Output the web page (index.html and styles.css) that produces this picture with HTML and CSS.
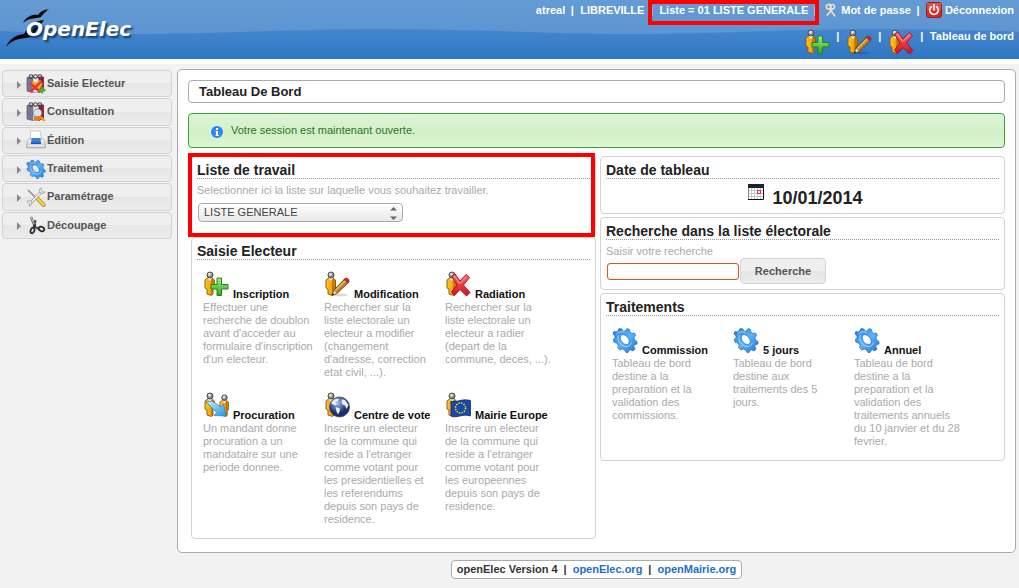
FILE: index.html
```html
<!DOCTYPE html>
<html lang="fr">
<head>
<meta charset="utf-8">
<title>openElec - Tableau De Bord</title>
<link rel="stylesheet" href="styles.css">
</head>
<body>
<svg class="sprite" aria-hidden="true">
  <defs>
    <linearGradient id="gBody"><stop offset="0" stop-color="#ffc62e"/><stop offset=".55" stop-color="#fba50c"/><stop offset="1" stop-color="#b87507"/></linearGradient>
    <radialGradient id="gHead" cx=".4" cy=".35"><stop offset="0" stop-color="#fff"/><stop offset="1" stop-color="#777"/></radialGradient>
    <linearGradient id="gPlus" x2="0" y2="1"><stop offset="0" stop-color="#a5ee7c"/><stop offset="1" stop-color="#2fa51c"/></linearGradient>
    <linearGradient id="gCross" x2="0" y2="1"><stop offset="0" stop-color="#ff6a6a"/><stop offset="1" stop-color="#cc1020"/></linearGradient>
    <linearGradient id="gGear" x2="1" y2="1"><stop offset="0" stop-color="#2379d6"/><stop offset=".5" stop-color="#5cb2fb"/><stop offset="1" stop-color="#1f74d8"/></linearGradient>
    <radialGradient id="gGlobe" cx=".4" cy=".3"><stop offset="0" stop-color="#a9bce6"/><stop offset=".6" stop-color="#4a67ab"/><stop offset="1" stop-color="#1c2f6c"/></radialGradient>
    <linearGradient id="gArrow" x2="1" y2="1"><stop offset="0" stop-color="#c8efff"/><stop offset="1" stop-color="#2296e6"/></linearGradient>
    <linearGradient id="gPrint" x2="0" y2="1"><stop offset="0" stop-color="#fdfdfd"/><stop offset="1" stop-color="#b9b9c2"/></linearGradient>
    <linearGradient id="gSky" x2="0" y2="1"><stop offset="0" stop-color="#649bd3"/><stop offset="1" stop-color="#5790d2"/></linearGradient>
    <linearGradient id="gSea" gradientUnits="userSpaceOnUse" x1="0" y1="28" x2="0" y2="59"><stop offset="0" stop-color="#4687cd"/><stop offset="1" stop-color="#2e76c5"/></linearGradient>
    <pattern id="wave" width="500" height="59" patternUnits="userSpaceOnUse">
      <path fill="url(#gSea)" d="M0 31C50 33 90 34 130 34C220 34 290 29 380 29C420 29 460 30 500 31V59H0Z"/>
    </pattern>
    <symbol id="person" viewBox="0 0 26 26">
      <path d="M2 9 4.500 7H9l2.500 2v8H10v6l-1.500 1.500L4 23v-5L2 17Z" fill="url(#gBody)" stroke="#8a5606" stroke-width=".9"/>
      <path d="M9 8v15.500" stroke="#a46a08" stroke-width="1"/>
      <path d="M5 7 7 10 9 7" fill="#fff"/>
      <circle cx="7" cy="4" r="3" fill="url(#gHead)" stroke="#4c4c4c" stroke-width="1"/>
    </symbol>
    <symbol id="plus" viewBox="0 0 26 26">
      <path d="M14 7h4.500v6.500H25V18h-6.500v6.500H14V18H8v-4.500h6Z" fill="url(#gPlus)" stroke="#23861b" stroke-width="1"/>
    </symbol>
    <symbol id="cross" viewBox="0 0 26 26">
      <path d="M6.500 5 10 3l5 7 6-6.500 3.500 3L18.500 14l6.500 7.500-3.500 3.500-6.500-6.500-5.500 6L6.500 21 12 14Z" fill="url(#gCross)" stroke="#a70a18" stroke-width=".9"/>
      <path d="M9 5l6 7.500L21.500 5.500" fill="none" stroke="#ff9b98" stroke-width="1"/>
    </symbol>
    <symbol id="pencil" viewBox="0 0 26 26">
      <ellipse cx="16" cy="24" rx="8" ry="1.500" fill="#000" opacity=".15"/>
      <path d="M8 24.500 10 19 20.500 8l4 3.500L13.500 22Z" fill="#bf8028" stroke="#67420f" stroke-width=".9"/>
      <path d="M11 20 22 9" stroke="#eab964" stroke-width="1.500"/>
      <path d="M8 24.500 10 19l3.500 3Z" fill="#f3d9a6" stroke="#67420f" stroke-width=".5"/>
      <path d="M8 24.500l.8-2.300 1.500 1.200Z" fill="#111"/>
      <path d="M20.500 8c1-2 5.500-.5 4.500 3l-.8.800-4.200-3.300Z" fill="#d3202a" stroke="#7b2020" stroke-width=".5"/>
    </symbol>
    <symbol id="gear" viewBox="0 0 26 26">
      <path fill="url(#gGear)" fill-rule="evenodd" stroke="#246db8" stroke-width=".7" d="M6 3.500 7 1.500l3 .5.500 2 2.500.2L15 1.500l2.500 1L18 5l2 1.500 2.500-.5 1 2.500L22 10.500l.5 2.500 2.500 1.500V17l-2.500.7-.7 1.800 1.200 2.500-2 2-2.500-1.200-1.500.6L16 25.500h-2L12.500 23l-2.200-1-2.600 1L5.500 20.500l.8-2.300L4.500 16 2 15.300 1.200 12.500l1.800-1.600v-2L1 7l.8-2.500L4.500 5Z M8.500 9C7.500 11.500 9.500 15.500 12.500 17C15 18.200 17 17.500 17.200 15C17.500 12 14.500 8.500 11.800 7.800C10.300 7.500 9 7.800 8.500 9Z"/>
      <path d="M6.500 8C4.500 12 7.500 17 11.500 19C15 20.500 19 19 19.200 15.500M4.500 7c2-2 5-3 8-1.500" fill="none" stroke="#a9daff" stroke-width="1"/>
    </symbol>
    <symbol id="globe" viewBox="0 0 26 26">
      <circle cx="15.500" cy="15" r="10" fill="url(#gGlobe)" stroke="#34416e" stroke-width=".8"/>
      <path d="M7 11c2-4 6-5 8-4l-1 2-2.500 1.500 2 1.500-2 1.500-2.500-1ZM11.500 15l4 1 .5 2.500-2 4-1.500-3ZM18 7l3.500 1.500L24.500 13 22.500 17l-1.500-3.500-2.500-1-1-2Z" fill="#e8edf8"/>
    </symbol>
    <symbol id="flag" viewBox="0 0 26 26">
      <path d="M6 9c5 2.500 10-3 19.500-.5V24C17 21 12 27 6 24Z" fill="#1849a6" stroke="#0c2a6c" stroke-width=".8"/>
      <circle cx="15.500" cy="16" r="5" fill="none" stroke="#ffe11c" stroke-width="1.500" stroke-dasharray="1.300 1.320"/>
    </symbol>
    <symbol id="arrow" viewBox="0 0 26 26">
      <path d="M3 10 9 9l9 6 2.500-3L23 24l-12-.5 2.500-3Z" fill="url(#gArrow)" stroke="#2583c4" stroke-width=".7"/>
    </symbol>
    <symbol id="keys" viewBox="0 0 16 16">
      <g fill="none" stroke="#8b9298" stroke-width="3.200"><circle cx="5" cy="4.500" r="2.500"/><path d="M6 7l6 8M9.500 6.500 3 14"/></g>
      <g fill="none" stroke="#e0e2e3" stroke-width="1.700"><circle cx="5" cy="4.500" r="2.500"/><circle cx="9" cy="4.500" r="2.300"/><path d="M6 7l6 8M9 7 3 14"/></g>
    </symbol>
    <symbol id="power" viewBox="0 0 16 16">
      <rect x=".5" y=".5" width="15" height="15" rx="2.500" fill="#da2822" stroke="#a51a19"/>
      <path d="M1 1h14v7H1Z" fill="#f07467" opacity=".5"/>
      <path d="M5.200 4.800a4.300 4.300 0 1 0 5.600 0M8 2.500v5.500" fill="none" stroke="#fff" stroke-width="1.700" stroke-linecap="round"/>
    </symbol>
    <symbol id="books" viewBox="0 0 20 20">
      <path d="M1 3.500 7 3v15.500L1 17Z" fill="#77779c" stroke="#50506b" stroke-width=".7"/>
      <path d="M7 3.500h6v15H7Z" fill="#e7e7ea" stroke="#8d8d98" stroke-width=".6"/>
      <path d="M13 3h4.500v13L13 18.500Z" fill="#9e1636" stroke="#66102a" stroke-width=".7"/>
      <g fill="none" stroke="#454545" stroke-width="1.100"><circle cx="5" cy="2.600" r="1.900"/><circle cx="9.500" cy="2.600" r="1.900"/><circle cx="13.800" cy="2.600" r="1.900"/></g>
    </symbol>
    <symbol id="m-entry" viewBox="0 0 20 20">
      <use href="#books" width="20" height="20"/>
      <path d="M6 7 10 9l4-3 2.500 4-3 5-7 1Z" fill="#ffb31a" stroke="#db7c00" stroke-width=".6"/>
      <path d="M4 9 14 18M15 8 4 18" stroke="#e3353a" stroke-width="2.400"/>
      <path d="M16 13v6.500M12.800 16.300H19.500" stroke="#46b52d" stroke-width="2.400"/>
    </symbol>
    <symbol id="m-search" viewBox="0 0 20 20">
      <use href="#books" width="20" height="20"/>
      <path d="m15 15 3.500 4" stroke="#e79a22" stroke-width="2.400"/>
      <circle cx="11.500" cy="11" r="4.200" fill="#cfe6f7" stroke="#8997a6" stroke-width="1"/>
      <path d="M8 14h7v3l-3 2-4-1Z" fill="#e2801a"/>
    </symbol>
    <symbol id="m-print" viewBox="0 0 20 20">
      <path d="M4.500 1H14l1.500 8h-11Z" fill="#fff" stroke="#b7b7bd" stroke-width=".7"/>
      <path d="M2.500 9h15l2 4.500v4.500H.5v-4.500Z" fill="url(#gPrint)" stroke="#9b9ba6" stroke-width=".6"/>
      <path d="M5.500 8h9l.5 5.500H5Z" fill="#3d7fe0"/><path d="M5 12.500h10v1.500H5Z" fill="#1e53ae"/>
      <path d="M2 16h16" stroke="#fff"/>
    </symbol>
    <symbol id="m-tools" viewBox="0 0 20 20">
      <path d="m2 3 9 9" stroke="#5b5b5b" stroke-width="1.400"/><path d="M2 3l9 9" stroke="#e8e8e8" stroke-width=".6"/>
      <path d="m11 11 6.500 7" stroke="#b3861a" stroke-width="4" stroke-linecap="round"/><path d="m11.500 11.500 6 6.500" stroke="#fbd548" stroke-width="2.400" stroke-linecap="round"/>
      <path d="M3.500 17 16 4.500" stroke="#999" stroke-width="2.800"/><path d="M3.500 17 16 4.500" stroke="#f6f6f6" stroke-width="1.500"/>
      <path d="M15 .8c-2 1-2 3.500-.8 4.800s4 1 5-.8l-2 .3-1.800-1.500ZM1 14.500c1.500-1.300 4-1 4.500.7S5 19 3 19l1-2-1.500-1.500Z" fill="#efefef" stroke="#999" stroke-width=".8"/>
    </symbol>
    <symbol id="m-cut" viewBox="0 0 20 20">
      <path d="m5 2 4 10 4 2M9.500 5 8 12l-1 2" fill="none" stroke="#4f4f4f" stroke-width="2.200"/>
      <path d="m5 2 3.500 8" stroke="#e6e6e6" stroke-width=".9"/>
      <ellipse cx="6.500" cy="15.500" rx="1.900" ry="2.900" transform="rotate(18 6.500 15.500)" fill="#ddd" stroke="#292929" stroke-width="1.700"/>
      <ellipse cx="15.500" cy="14" rx="2.900" ry="2.100" transform="rotate(25 15.500 14)" fill="#ddd" stroke="#292929" stroke-width="1.700"/>
      <circle cx="8.700" cy="10.500" r="1.300" fill="#222"/>
    </symbol>
  </defs>
</svg>

<header class="header">
  <svg class="header-wave" aria-hidden="true"><rect width="100%" height="59" fill="url(#gSky)"/><rect width="100%" height="59" fill="url(#wave)"/></svg>
  <a class="logo" href="#">
    <svg class="logo-bird" viewBox="0 0 46 42" aria-hidden="true">
      <path d="M17 15C20 8 28 6 32 7C35 3 38 2 43 1C40 3 37 6 35 9C30 11 24 9 17 15Z" fill="#050505"/>
      <path d="M0 39C4 29 14 26 18 26C23 17 29 13 38 12L26 29C18 31 8 29 0 39Z" fill="#050505"/>
    </svg>
    <span class="logo-text">OpenElec</span>
  </a>
  <nav class="header-nav" aria-label="Compte">
    <ul class="links">
      <li>atreal</li>
      <li>LIBREVILLE</li>
      <li class="marked"><a href="#">Liste = 01 LISTE GENERALE</a><span class="mark mark-list"></span></li>
      <li class="with-icon"><a href="#"><svg class="icon-key" aria-hidden="true"><use href="#keys"/></svg>Mot de passe</a></li>
      <li><a href="#"><svg class="icon-power" aria-hidden="true"><use href="#power"/></svg>Déconnexion</a></li>
    </ul>
    <ul class="links shortcuts">
      <li><a href="#" aria-label="Inscription"><svg class="icon"><use href="#person"/><use href="#plus"/></svg></a></li>
      <li><a href="#" aria-label="Modification"><svg class="icon"><use href="#person"/><use href="#pencil"/></svg></a></li>
      <li><a href="#" aria-label="Radiation"><svg class="icon"><use href="#person"/><use href="#cross"/></svg></a></li>
      <li><a href="#">Tableau de bord</a></li>
    </ul>
  </nav>
</header>

<div class="page">
  <nav class="menu" aria-label="Menu">
    <a href="#"><span class="caret"></span><svg class="menu-icon"><use href="#m-entry"/></svg>Saisie Electeur</a>
    <a href="#"><span class="caret"></span><svg class="menu-icon"><use href="#m-search"/></svg>Consultation</a>
    <a href="#"><span class="caret"></span><svg class="menu-icon"><use href="#m-print"/></svg>Édition</a>
    <a href="#"><span class="caret"></span><svg class="menu-icon"><use href="#gear"/></svg>Traitement</a>
    <a href="#"><span class="caret"></span><svg class="menu-icon"><use href="#m-tools"/></svg>Paramétrage</a>
    <a href="#"><span class="caret"></span><svg class="menu-icon"><use href="#m-cut"/></svg>Découpage</a>
  </nav>

  <main class="content">
    <h1 class="title">Tableau De Bord</h1>
    <p class="message"><svg class="info" viewBox="0 0 12 12" aria-hidden="true"><circle cx="6" cy="6" r="6" fill="#2e83ff"/><path d="M5 2h2v2H5ZM4.500 5H7v4h1v1H4.500V9H5V6h-.5Z" fill="#fff"/></svg>Votre session est maintenant ouverte.</p>

    <div class="columns">
      <div class="column">
        <section class="widget list-widget">
          <h2>Liste de travail</h2>
          <label class="hint" for="liste">Selectionner ici la liste sur laquelle vous souhaitez travailler.</label>
          <div class="select">
            <select id="liste"><option>LISTE GENERALE</option></select>
            <svg class="select-arrows" viewBox="0 0 7 13" aria-hidden="true"><path d="M0 3.500 3.500 0 7 3.500ZM0 9.500 3.500 13 7 9.500Z" fill="#666"/></svg>
          </div>
          <span class="mark mark-widget"></span>
        </section>
        <section class="widget">
          <h2>Saisie Electeur</h2>
          <div class="tiles">
            <article class="tile"><a href="#"><svg class="icon"><use href="#person"/><use href="#plus"/></svg>Inscription</a><p>Effectuer une recherche de doublon avant d'acceder au formulaire&nbsp;d'inscription d'un electeur.</p></article>
            <article class="tile"><a href="#"><svg class="icon"><use href="#person"/><use href="#pencil"/></svg>Modification</a><p>Rechercher sur la liste electorale un electeur a modifier (changement d'adresse, correction etat civil, ...).</p></article>
            <article class="tile"><a href="#"><svg class="icon"><use href="#person"/><use href="#cross"/></svg>Radiation</a><p>Rechercher sur la liste electorale un electeur a radier (depart de la commune, deces, ...).</p></article>
            <article class="tile"><a href="#"><svg class="icon"><use href="#person"/><use href="#person" x="14" y="2" width="26" height="24"/><use href="#arrow"/></svg>Procuration</a><p>Un mandant donne procuration a un mandataire sur une periode donnee.</p></article>
            <article class="tile"><a href="#"><svg class="icon"><use href="#person"/><use href="#globe"/></svg>Centre de vote</a><p>Inscrire un electeur<br>de la commune qui reside a l'etranger comme votant pour les presidentielles et les referendums depuis son pays de residence.</p></article>
            <article class="tile"><a href="#"><svg class="icon"><use href="#person"/><use href="#flag"/></svg>Mairie Europe</a><p>Inscrire un electeur<br>de la commune qui reside a l'etranger comme votant pour les europeennes depuis son pays de residence.</p></article>
          </div>
        </section>
      </div>

      <div class="column">
        <section class="widget">
          <h2>Date de tableau</h2>
          <p class="date"><svg class="calendar" viewBox="0 0 16 16" aria-hidden="true"><path d="M0 0h16v16H0Z" fill="#fff"/><path d="M1 6.500h14M1 9.500h14M1 12.500h14M3.500 4v11M6.500 4v11M9.500 4v11M12.500 4v11" stroke="#ccc"/><path d="M.5 0v16" stroke="#888"/><path d="M0 15.500h15.500V0" fill="none" stroke="#111"/><path d="M0 0h16v4H0Z" fill="#1c2130"/><path d="M9.500 6.500h3v3h-3Z" fill="#fff" stroke="#e0206c"/></svg>10/01/2014</p>
        </section>
        <section class="widget">
          <h2>Recherche dans la liste électorale</h2>
          <form class="search">
            <label class="hint" for="recherche">Saisir votre recherche</label>
            <div class="search-row"><input id="recherche" type="text"><button type="button">Recherche</button></div>
          </form>
        </section>
        <section class="widget">
          <h2>Traitements</h2>
          <div class="tiles">
            <article class="tile"><a href="#"><svg class="icon"><use href="#gear"/></svg>Commission</a><p>Tableau de bord destine a la preparation et la validation des commissions.</p></article>
            <article class="tile"><a href="#"><svg class="icon"><use href="#gear"/></svg>5 jours</a><p>Tableau de bord destine aux traitements des 5 jours.</p></article>
            <article class="tile"><a href="#"><svg class="icon"><use href="#gear"/></svg>Annuel</a><p>Tableau de bord destine a la preparation et la validation des traitements annuels du 10 janvier et du 28 fevrier.</p></article>
          </div>
        </section>
      </div>
    </div>
  </main>
</div>

<footer class="footer"><div class="footer-box"><span>openElec Version 4</span><span>|</span><a href="#">openElec.org</a><span>|</span><a href="#">openMairie.org</a></div></footer>
</body>
</html>
```

FILE: styles.css
```css
* { box-sizing: border-box; }
body {
  margin: 0;
  background: #f2f2f2;
  color: #222;
  font: 11px/13px "Liberation Sans", Arial, sans-serif;
}
h1, h2, p, ul { margin: 0; padding: 0; }
a { color: inherit; text-decoration: none; }
.sprite { position: absolute; width: 0; height: 0; }

.header {
  position: relative;
  display: flex;
  justify-content: space-between;
  height: 64px;
  border-bottom: 5px solid #fff;
  color: #fff;
  font-weight: bold;
}
.header-wave { position: absolute; inset: 0; width: 100%; height: 59px; }
.logo { position: relative; padding: 8px 0 0 6px; display: flex; }
.logo-bird { width: 46px; height: 42px; }
.logo-text {
  margin-left: -26px;
  padding-top: 9px;
  font: italic bold 20px/24px "DejaVu Sans", sans-serif;
  text-shadow: 2px 2px 2px #173a66;
}
.header-nav { position: relative; padding: 2px 5px 0 0; }
.links { display: flex; justify-content: flex-end; list-style: none; line-height: 16px; }
.links li { display: flex; }
.links li + li::before { content: "|"; width: 2px; margin: 0 7px 0 6px; display: flex; justify-content: center; }
.links a { display: flex; }
.links .marked { position: relative; }
.links .with-icon::before { margin-right: 8px; }
.icon-key { width: 15px; height: 16px; margin-right: 2px; }
.icon-power { width: 16px; height: 16px; margin-right: 3px; }
.shortcuts { margin-top: 10px; }
.shortcuts li + li::before { margin: 0 7px; }
.shortcuts .icon { margin-top: 1px; }
.icon { width: 26px; height: 26px; flex: none; }
.mark { position: absolute; z-index: 1; border: 4px solid #f00; pointer-events: none; }
.mark-list { left: 4px; right: -11px; top: -2px; height: 25px; }

.page { display: flex; align-items: flex-start; padding: 5px 3px 0 2px; }
.menu { display: flex; flex-direction: column; gap: 1px; width: 170px; height: 169px; margin: 1px 5px 0 0; flex: none; }
.menu a {
  flex: 1;
  display: flex;
  align-items: center;
  padding-left: 14px;
  border: 1px solid #d3d3d3;
  border-radius: 4px;
  background: linear-gradient(#efefef 0 50%, #e6e6e6 50%, #ececec);
  color: #555;
  font-weight: bold;
}
.caret { border: 4px solid transparent; border-left: 4px solid #888; border-right: 0; margin: 2px 5px 0 0; }
.menu-icon { width: 20px; height: 20px; margin-right: 1px; }

.content {
  flex: 1;
  min-width: 0;
  padding: 10px 10px 13px;
  border: 1px solid #aaa;
  border-radius: 5px;
  background: #fff;
}
.title { padding: 3px 10px; border: 1px solid #aaa; border-radius: 4px; font-size: 13px; line-height: 15px; }
.message {
  display: flex;
  align-items: center;
  height: 35px;
  margin-top: 10px;
  padding-left: 22px;
  border: 1px solid #3c9f3c;
  border-radius: 4px;
  background: linear-gradient(#dcf5d6, #d2f1c6 60%, #dcf5d2);
  color: #2e7031;
}
.info { width: 12px; height: 12px; margin: 3px 8px 0 0; }

.columns { display: grid; grid-template-columns: 1fr 1fr; gap: 4px; margin: 8px 0 0 3px; align-items: start; }
.column { display: flex; flex-direction: column; gap: 3px; }
.widget { position: relative; padding: 5px 5px 12px; border: 1px solid #d3d3d3; border-radius: 4px; }
.widget h2 { margin-bottom: 1px; border-bottom: 1px dotted #999; font-size: 14px; line-height: 16px; }
.hint { display: block; padding-top: 4px; color: #aaa; }
.list-widget { padding-bottom: 11px; }
.mark-widget { inset: -4px 0 -4px -4px; }
.select { position: relative; width: 205px; margin: 6px 1px 0; }
.select select {
  appearance: none;
  display: block;
  width: 100%;
  height: 19px;
  padding: 0 5px;
  border: 1px solid #aaa;
  border-radius: 4px;
  background: linear-gradient(#fff, #e8e8e8);
  color: #444;
  font: inherit;
}
.select-arrows { position: absolute; right: 6px; top: 4px; width: 7px; height: 13px; pointer-events: none; }
.tiles { display: grid; grid-template-columns: repeat(3, 109px); gap: 14px 12px; padding: 11px 6px 0; }
.tile a { display: flex; align-items: flex-end; gap: 4px; height: 29px; font-weight: bold; color: #111; }
.tile .icon { margin-bottom: 4px; }
.tile p { color: #aaa; }

.date { display: flex; justify-content: center; gap: 8px; height: 33px; margin-bottom: -12px; padding: 4px 0 0 6px; font-size: 18px; line-height: 28px; font-weight: bold; }
.calendar { width: 16px; height: 16px; }
.search { margin-bottom: -7px; }
.search-row { display: flex; align-items: center; gap: 1px; padding-left: 1px; }
.search-row input { width: 132px; height: 17px; padding: 0 4px; border: 1px solid #cd5a2c; border-radius: 3px; box-shadow: inset 0 0 1px #e69070; font: inherit; outline: 0; }
.search-row button { width: 86px; height: 26px; padding: 0; border: 1px solid #d3d3d3; border-radius: 4px; background: linear-gradient(#efefef 0 50%, #e6e6e6 50%, #ececec); color: #555; font: inherit; font-weight: bold; }

.footer { display: flex; justify-content: center; padding: 7px 0 8px; margin-left: 174px; font-weight: bold; }
.footer-box { display: flex; gap: 6px; padding: 2px 5px; border: 1px solid #aaa; border-radius: 4px; background: #fff; color: #333; }
.footer a { color: #1b6fc9; }
```
